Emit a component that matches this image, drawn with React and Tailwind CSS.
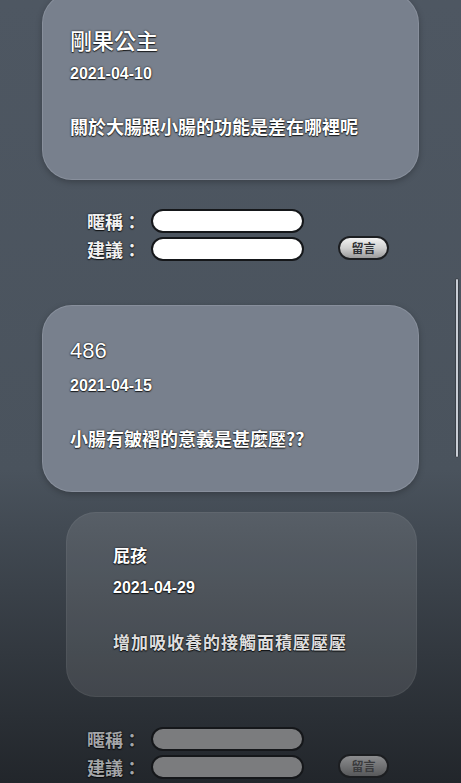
import React from "react";

const cjk = "font-['Noto_Sans_CJK_TC','Noto_Sans',sans-serif]";
const latin = "font-['Liberation_Sans','Noto_Sans_CJK_TC',sans-serif]";
const outline = "[text-shadow:0_0_2px_rgba(0,0,0,0.9),0_1px_1px_rgba(0,0,0,0.7)]";

const posts = [
  {
    name: "剛果公主",
    date: "2021-04-10",
    text: "關於大腸跟小腸的功能是差在哪裡呢",
    first: true,
  },
  {
    name: "486",
    date: "2021-04-15",
    text: "小腸有皺褶的意義是甚麼壓??",
    reply: {
      name: "屁孩",
      date: "2021-04-29",
      text: "增加吸收養的接觸面積壓壓壓",
    },
  },
];

function Post({ post }) {
  return (
    <div
      className={`mx-[42px] h-[187px] rounded-[30px] border border-[#8e96a3]/70 bg-[#78808d] pl-[27px] pt-[31px] shadow-[0_2px_6px_rgba(0,0,0,0.25)] ${
        post.first ? "-mt-[7px]" : ""
      }`}
    >
      <div className={`text-[22px] font-medium leading-[28px] text-white ${outline} ${post.name === "486" ? latin : cjk}`}>
        {post.name}
      </div>
      <div className={`mt-[11px] text-[16px] font-bold leading-[20px] text-white ${latin} ${outline}`}>
        {post.date}
      </div>
      <div className={`mt-[30px] text-[18px] font-bold leading-[24px] text-white ${cjk} ${outline}`}>
        {post.text}
      </div>
    </div>
  );
}

function Reply({ reply }) {
  return (
    <div className="ml-[66px] mr-[44px] mt-[20px] h-[185px] rounded-[30px] border border-white/5 bg-white/[0.1] pl-[46px] pt-[30px]">
      <div className={`text-[17px] font-bold leading-[24px] text-white ${cjk} ${outline}`}>
        {reply.name}
      </div>
      <div className={`mt-[11px] text-[16px] font-bold leading-[20px] text-white ${latin} ${outline}`}>
        {reply.date}
      </div>
      <div className={`mt-[32px] text-[17px] font-bold leading-[24px] tracking-[1px] text-[#dedede] ${cjk} ${outline}`}>
        {reply.text}
      </div>
    </div>
  );
}

function CommentForm({ dim }) {
  const label = `text-[18px] font-bold leading-[24px] text-right ${cjk} ${outline} ${
    dim ? "text-[#a4a6a9]" : "text-[#f2f2f2]"
  }`;
  const input = `h-[24px] w-[153px] rounded-full border-2 border-[#15171a] ${
    dim ? "bg-[#7b7c7e]" : "bg-white"
  }`;
  return (
    <div className="flex items-end pl-[87px]">
      <div className="grid grid-cols-[auto_153px] items-center gap-x-[10px] gap-y-[4px]">
        <span className={label}>暱稱：</span>
        <input className={input} />
        <span className={label}>建議：</span>
        <input className={input} />
      </div>
      <button
        className={`ml-[34px] mb-[1px] h-[24px] w-[51px] rounded-full border-2 border-[#1c1e21] text-[12px] font-bold leading-none ${cjk} ${
          dim
            ? "bg-linear-to-b from-[#8c8d8f] to-[#58595b] text-[#3a3b3d]"
            : "bg-linear-to-b from-[#f2f2f2] via-[#d0d0d0] to-[#9b9b9b] text-[#2d2f33]"
        }`}
      >
        留言
      </button>
    </div>
  );
}

export default function App() {
  return (
    <div className="relative h-[783px] w-full overflow-hidden bg-linear-to-b from-[#4e5762] via-[#4a535d] via-60% to-[#22262b]">
      <Post post={posts[0]} />
      <div className="mt-[29px]">
        <CommentForm />
      </div>
      <div className="mt-[44px]">
        <Post post={posts[1]} />
      </div>
      <Reply reply={posts[1].reply} />
      <div className="mt-[30px]">
        <CommentForm dim />
      </div>
      {/* scrollbar */}
      <div className="absolute right-[2px] top-[278px] h-[180px] w-[4px] rounded-full border border-[#3a4048] bg-[#c9ced6]" />
    </div>
  );
}
